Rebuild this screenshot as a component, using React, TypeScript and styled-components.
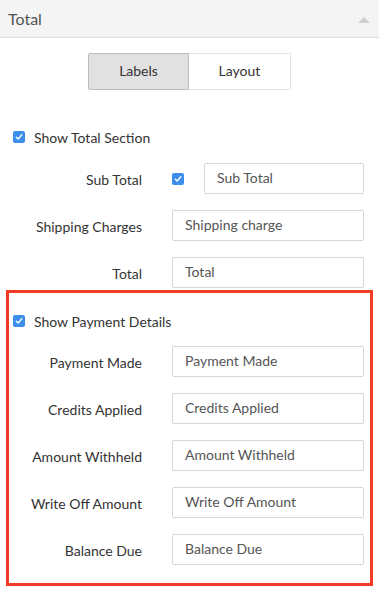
import React from "react";
import styled, { createGlobalStyle } from "styled-components";

const GlobalStyle = createGlobalStyle`
  body {
    margin: 0;
    background: #fff;
    font-family: "Lato", "Open Sans", sans-serif;
    color: #333;
  }
`;

const Panel = styled.div`
  width: 379px;
  min-height: 596px;
  box-sizing: border-box;
`;

const Header = styled.div`
  height: 37px;
  background-color: #f4f4f4;
  border-bottom: 1px solid #dcdcdc;
  display: flex;
  align-items: center;
  justify-content: space-between;
  padding: 0 9px 0 8px;
  font-size: 16px;
  color: #555;
`;

const Caret = styled.span`
  width: 0;
  height: 0;
  border-left: 6px solid transparent;
  border-right: 6px solid transparent;
  border-bottom: 6px solid #cfcfcf;
  margin-top: 2px;
`;

const Toggle = styled.div`
  display: flex;
  justify-content: center;
  margin-top: 15px;
`;

const ToggleButton = styled.button<{ active?: boolean }>`
  width: ${(p) => (p.active ? "101px" : "102px")};
  height: 37px;
  padding: 0 0 2px;
  font-family: inherit;
  font-size: 14px;
  color: #333;
  cursor: pointer;
  background-color: ${(p) => (p.active ? "#e1e1e1" : "#fff")};
  border: 1px solid ${(p) => (p.active ? "#bdbdbd" : "#e2e2e2")};
  border-left: ${(p) => (p.active ? "1px solid #bdbdbd" : "none")};
  border-radius: ${(p) => (p.active ? "2px 0 0 2px" : "0 2px 2px 0")};
`;

const Section = styled.div<{ highlighted?: boolean }>`
  margin: ${(p) => (p.highlighted ? "2px 6px 0" : "37px 0 0")};
  border: ${(p) => (p.highlighted ? "3px solid #f23b25" : "none")};
  padding: ${(p) => (p.highlighted ? "18px 6px 18px 4px" : "0 15px 0 13px")};
`;

const CheckRow = styled.label<{ spacing: number }>`
  display: flex;
  align-items: center;
  gap: 9px;
  height: 20px;
  font-size: 14px;
  color: #333;
  margin-bottom: ${(p) => p.spacing}px;
`;

const Box = styled.span`
  width: 12px;
  height: 12px;
  border-radius: 2px;
  background-color: #3b8eea;
  display: inline-flex;
  align-items: center;
  justify-content: center;
  flex-shrink: 0;
`;

const Row = styled.div`
  display: flex;
  align-items: center;
  height: 31px;
  & + & {
    margin-top: 16px;
  }
`;

const Label = styled.span`
  width: 129px;
  text-align: right;
  font-size: 14px;
  color: #333;
  flex-shrink: 0;
  margin-top: 1px;
  white-space: nowrap;
`;

const Field = styled.div`
  flex: 1;
  min-width: 0;
  margin-left: 30px;
  display: flex;
  align-items: center;
  gap: 20px;
`;

const Input = styled.input`
  flex: 1;
  min-width: 0;
  width: 100%;
  height: 31px;
  box-sizing: border-box;
  border: 1px solid #d6d6d6;
  border-radius: 2px;
  padding: 0 12px 2px;
  font-family: inherit;
  font-size: 14px;
  color: #555;
  outline: none;
`;

const Check = () => (
  <Box>
    <svg width="8" height="8" viewBox="0 0 8 8">
      <path d="M1.3 4.2 L3.2 6 L6.8 1.8" fill="none" stroke="#fff" strokeWidth="1.4" strokeLinecap="round" strokeLinejoin="round" />
    </svg>
  </Box>
);

const payments = ["Payment Made", "Credits Applied", "Amount Withheld", "Write Off Amount", "Balance Due"];

const App = () => {
  return (
    <Panel>
      <GlobalStyle />
      <Header>
        Total
        <Caret />
      </Header>
      <Toggle>
        <ToggleButton active>Labels</ToggleButton>
        <ToggleButton>Layout</ToggleButton>
      </Toggle>

      <Section>
        <CheckRow spacing={16}>
          <Check />
          Show Total Section
        </CheckRow>
        <Row>
          <Label>Sub Total</Label>
          <Field>
            <Check />
            <Input defaultValue="Sub Total" />
          </Field>
        </Row>
        <Row>
          <Label>Shipping Charges</Label>
          <Field>
            <Input defaultValue="Shipping charge" />
          </Field>
        </Row>
        <Row>
          <Label>Total</Label>
          <Field>
            <Input defaultValue="Total" />
          </Field>
        </Row>
      </Section>

      <Section highlighted>
        <CheckRow spacing={15}>
          <Check />
          Show Payment Details
        </CheckRow>
        {payments.map((name) => (
          <Row key={name}>
            <Label>{name}</Label>
            <Field>
              <Input defaultValue={name} />
            </Field>
          </Row>
        ))}
      </Section>
    </Panel>
  );
};

export default App;
